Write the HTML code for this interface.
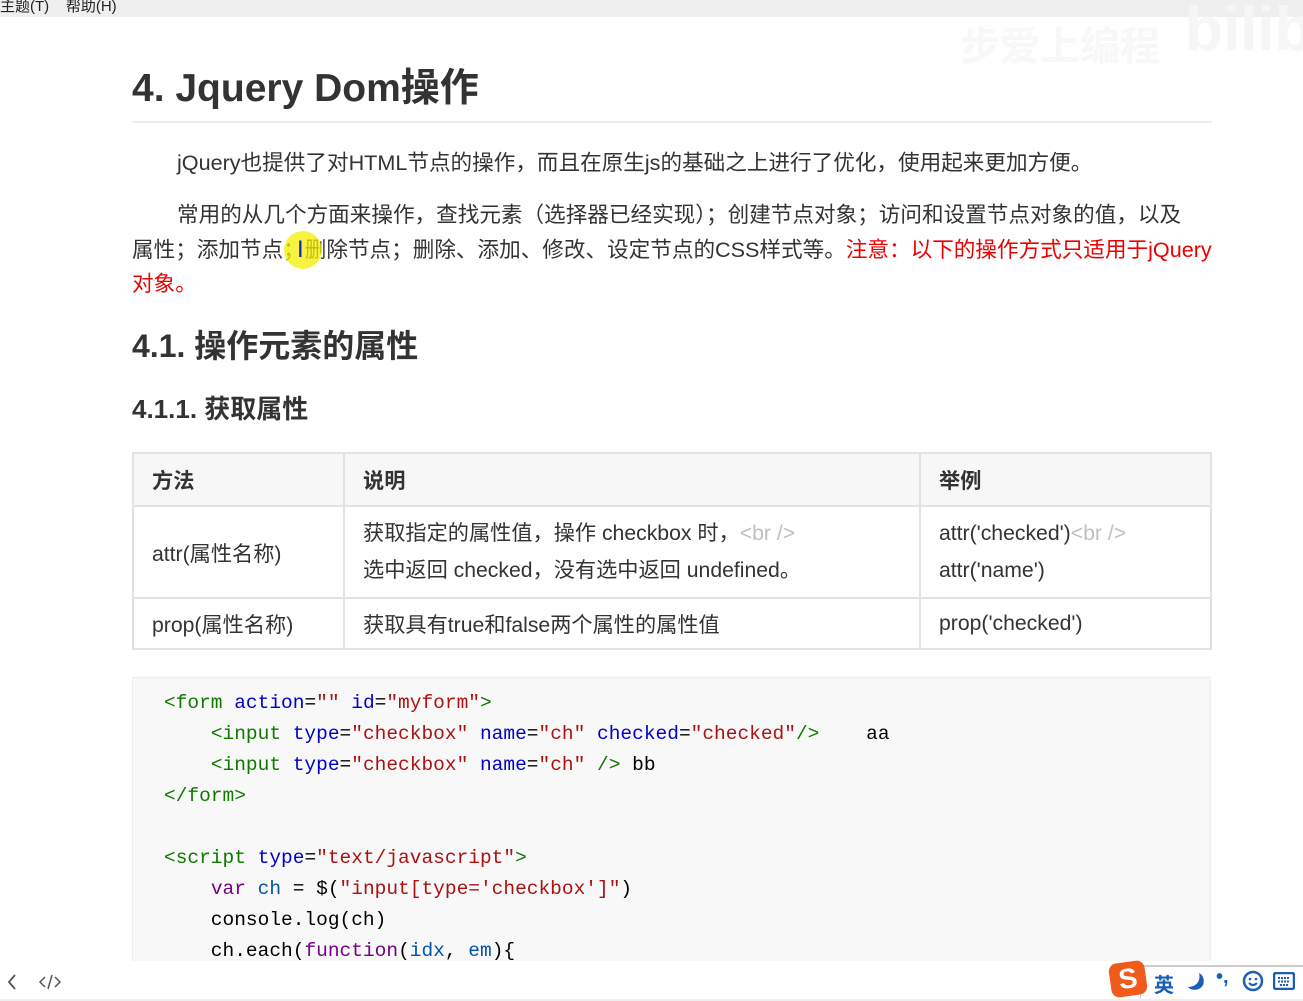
<!DOCTYPE html>
<html><head><meta charset="utf-8"><style>
*{margin:0;padding:0;box-sizing:border-box}
body{width:1303px;height:1001px;position:relative;background:#fff;overflow:hidden;font-family:"Liberation Sans","Noto Sans CJK SC",sans-serif;color:#333}
.a{position:absolute;white-space:nowrap}
.menu{top:0;left:0;width:1303px;height:17px;background:#efefef;font-size:15px;line-height:14px;color:#222}
.t{font-size:21.6px;line-height:34px}
.red{color:#e00}
.code{position:absolute;left:132px;top:677px;width:1079px;height:284px;background:#f8f8f8;border:1px solid #eee;border-bottom:none}
.cl{position:absolute;left:164px;font-family:"Liberation Mono","Noto Sans CJK SC",monospace;font-size:19.5px;line-height:31px;white-space:pre;color:#000}
.g{color:#117700}.b{color:#0000cc}.s{color:#aa1111}.k{color:#770088}.v{color:#0055aa}
table{position:absolute;left:132px;top:452px;width:1080px;border-collapse:collapse;font-size:21.2px}
td,th{border:2px solid #e2e2e2;padding:0 18px;text-align:left;vertical-align:middle}
th{background:#f7f7f7;height:53px;font-weight:bold}
.gr{color:#c0c0c0}
</style></head><body>
<div class="a menu">主题(T)&nbsp;&nbsp;&nbsp;&nbsp;帮助(H)</div>
<div class="a" style="left:960px;top:14px;font-size:40px;color:#f8f8f8;font-weight:bold">步爱上编程</div>
<div class="a" style="left:1185px;top:0;font-size:62px;color:#f6f6f6;font-weight:bold;line-height:60px">bilibi</div>
<div class="a" style="left:132px;top:64px;font-size:39px;font-weight:bold;line-height:50px;color:#333">4. Jquery Dom操作</div>
<div class="a" style="left:132px;top:121px;width:1080px;height:2px;background:#eee"></div>
<div class="a t" style="left:177px;top:146px">jQuery也提供了对HTML节点的操作，而且在原生js的基础之上进行了优化，使用起来更加方便。</div>
<div class="a t" style="left:177px;top:198px">常用的从几个方面来操作，查找元素（选择器已经实现）；创建节点对象；访问和设置节点对象的值，以及</div>
<div class="a t" style="left:132px;top:233px">属性；添加节点；删除节点；删除、添加、修改、设定节点的CSS样式等。<span class="red">注意：以下的操作方式只适用于jQuery</span></div>
<div class="a t red" style="left:132px;top:267px">对象。</div>
<div class="a" style="left:284px;top:231px;width:38px;height:38px;border-radius:50%;background:#f5ef00;opacity:0.75"></div>
<div class="a" style="left:297px;top:236px;font-size:24px;color:#1020c0;line-height:28px">I</div>
<div class="a" style="left:132px;top:326px;font-size:32px;font-weight:bold;line-height:40px">4.1. 操作元素的属性</div>
<div class="a" style="left:132px;top:392px;font-size:26px;font-weight:bold;line-height:34px">4.1.1. 获取属性</div>
<table>
<tr><th style="width:211px">方法</th><th style="width:576px">说明</th><th>举例</th></tr>
<tr><td style="height:92px">attr(属性名称)</td><td style="line-height:37px">获取指定的属性值，操作 checkbox 时，<span class="gr">&lt;br /&gt;</span><br>选中返回 checked，没有选中返回 undefined。</td><td style="line-height:37px">attr('checked')<span class="gr">&lt;br /&gt;</span><br>attr('name')</td></tr>
<tr><td style="height:51px">prop(属性名称)</td><td>获取具有true和false两个属性的属性值</td><td>prop('checked')</td></tr>
</table>
<div class="code"></div>
<div class="cl" style="top:688px"><span class="g">&lt;form</span> <span class="b">action</span>=<span class="s">""</span> <span class="b">id</span>=<span class="s">"myform"</span><span class="g">&gt;</span></div>
<div class="cl" style="top:719px">    <span class="g">&lt;input</span> <span class="b">type</span>=<span class="s">"checkbox"</span> <span class="b">name</span>=<span class="s">"ch"</span> <span class="b">checked</span>=<span class="s">"checked"</span><span class="g">/&gt;</span>    aa</div>
<div class="cl" style="top:750px">    <span class="g">&lt;input</span> <span class="b">type</span>=<span class="s">"checkbox"</span> <span class="b">name</span>=<span class="s">"ch"</span> <span class="g">/&gt;</span> bb</div>
<div class="cl" style="top:781px"><span class="g">&lt;/form&gt;</span></div>
<div class="cl" style="top:843px"><span class="g">&lt;script</span> <span class="b">type</span>=<span class="s">"text/javascript"</span><span class="g">&gt;</span></div>
<div class="cl" style="top:874px">    <span class="k">var</span> <span class="v">ch</span> = $(<span class="s">"input[type='checkbox']"</span>)</div>
<div class="cl" style="top:905px">    console.log(ch)</div>
<div class="cl" style="top:936px;height:25px;overflow:hidden">    ch.each(<span class="k">function</span>(<span class="v">idx</span>, <span class="v">em</span>){</div>
<div class="a" style="left:0;top:961px;width:1303px;height:40px;background:#fff"></div>
<div class="a" style="left:0;top:999px;width:1303px;height:2px;background:#eee"></div>
<svg class="a" style="left:5px;top:972px" width="60" height="20"><path d="M10 3L4 10L10 17" fill="none" stroke="#555" stroke-width="1.8"/><path d="M40 5L35 10L40 15M50 5L55 10L50 15M47 3L43 17" fill="none" stroke="#555" stroke-width="1.5"/></svg>
<div class="a" style="left:1140px;top:965px;width:163px;height:34px;background:#fff;border-top:2px solid #ccc;border-left:1px solid #ccc"></div>
<div class="a" style="left:1110px;top:962px;width:36px;height:34px;background:#f05a1a;border-radius:8px;transform:rotate(-8deg);color:#fff;font-weight:bold;font-size:28px;text-align:center;line-height:34px">S</div>
<div class="a" style="left:1154px;top:969px;font-size:20px;color:#1a5fb4;font-weight:bold">英</div>
<svg class="a" style="left:1184px;top:970px" width="22" height="22"><path d="M15 3C17 10 13 17 4 17C7 21 16 21 19 15C21 10 19 5 15 3Z" fill="#1a5fb4"/></svg>
<div class="a" style="left:1216px;top:966px;font-size:20px;color:#1a5fb4;font-weight:bold">•,</div>
<svg class="a" style="left:1242px;top:970px" width="22" height="22"><circle cx="11" cy="11" r="9" fill="none" stroke="#1a5fb4" stroke-width="2.5"/><circle cx="8" cy="9" r="1.3" fill="#1a5fb4"/><circle cx="14" cy="9" r="1.3" fill="#1a5fb4"/><path d="M7 13Q11 17 15 13" fill="none" stroke="#1a5fb4" stroke-width="2"/></svg>
<svg class="a" style="left:1273px;top:972px" width="22" height="18"><rect x="1" y="1" width="20" height="16" rx="2" fill="none" stroke="#1a5fb4" stroke-width="2.5"/><path d="M5 6h12M5 9.5h12M7 13h8" stroke="#1a5fb4" stroke-width="2" stroke-dasharray="2 1"/></svg>
</body></html>
